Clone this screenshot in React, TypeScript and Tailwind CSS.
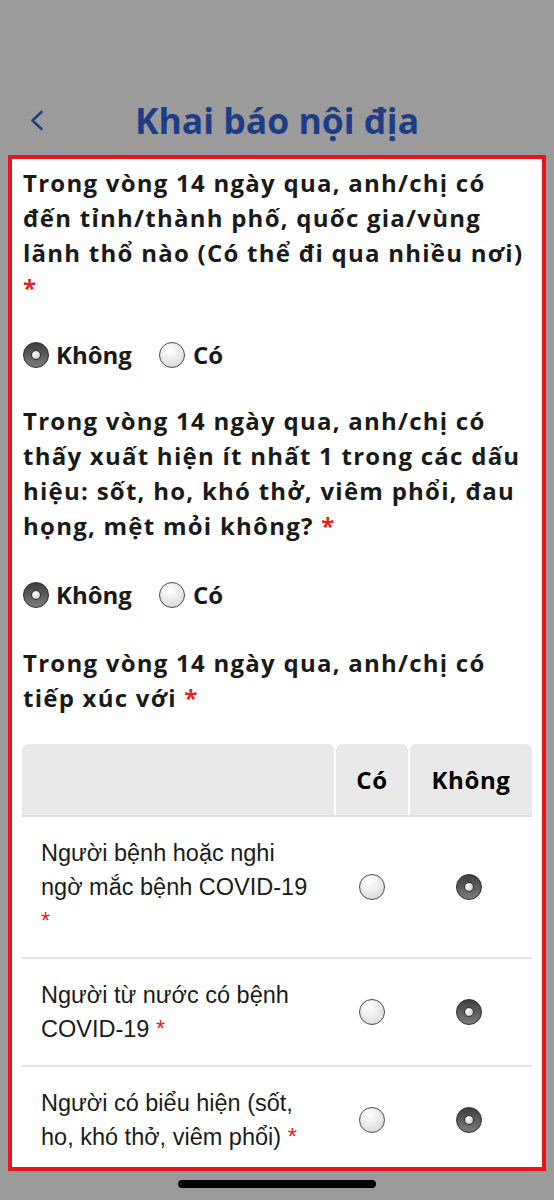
import React from "react";

const Q = "font-['Open_Sans','Noto_Sans',sans-serif]";

function Radio({ checked }: { checked?: boolean }) {
  if (checked) {
    return (
      <span className="flex size-[26px] shrink-0 items-center justify-center rounded-full border-[1.5px] border-[#2b2b2b] bg-[linear-gradient(to_bottom,#3e3e3e,#7c7c7c)]">
        <span className="block size-[10px] rounded-full border border-[#2e2e2e] bg-[radial-gradient(circle_at_40%_35%,#ffffff,#bcbcbc)]" />
      </span>
    );
  }
  return (
    <span className="block size-[26px] shrink-0 rounded-full border-[1.5px] border-[#4a4a4a] bg-[radial-gradient(circle_at_40%_30%,#ffffff,#d2d2d2)]" />
  );
}

function Star() {
  return <span className="text-[#e3241f]">*</span>;
}

function RadioRow({ className }: { className: string }) {
  return (
    <div className={`flex h-[36px] items-center ${className}`}>
      <Radio checked />
      <span className="ml-[7px] text-[24px] font-bold leading-[36px] text-[#1a1a1a]">Không</span>
      <span className="ml-[27px]">
        <Radio />
      </span>
      <span className="ml-[8px] text-[24px] font-bold leading-[36px] text-[#1a1a1a]">Có</span>
    </div>
  );
}

function Question({ children, className }: { children: React.ReactNode; className: string }) {
  return (
    <p className={`text-[24px] font-bold leading-[35px] tracking-[1.25px] text-[#1a1a1a] ${className}`}>{children}</p>
  );
}

const rows: React.ReactNode[] = [
  <>
    Người bệnh hoặc nghi
    <br />
    ngờ mắc bệnh COVID-19
    <br />
    <Star />
  </>,
  <>
    Người từ nước có bệnh
    <br />
    COVID-19 <Star />
  </>,
  <>
    Người có biểu hiện (sốt,
    <br />
    ho, khó thở, viêm phổi) <Star />
  </>,
];

export default function App() {
  return (
    <div className={`min-h-[1200px] w-full bg-[#9b9b9b] ${Q}`}>
      <header className="flex h-[155px] flex-col justify-end pb-[11px]">
        <div className="grid h-[48px] grid-cols-[1fr_auto_1fr] items-center">
          <div className="pl-[29px]">
            <svg width="15" height="21" viewBox="0 0 15 21" fill="none">
              <path d="M12.5 2 L3.5 10.5 L12.5 19" stroke="#203f88" strokeWidth="2.6" strokeLinecap="round" strokeLinejoin="round" />
            </svg>
          </div>
          <h1 className="text-[35.5px] font-bold leading-[48px] text-[#1f3d87]">Khai báo nội địa</h1>
          <div />
        </div>
      </header>

      <main className="mx-[8px] h-[1016px] overflow-hidden border-4 border-[#e8161c] bg-white pl-[11px] pr-[9px] pt-[6px]">
        <Question className="">
          Trong vòng 14 ngày qua, anh/chị có đến tỉnh/thành phố, quốc gia/vùng lãnh thổ nào (Có thể đi qua nhiều nơi)
          <br />
          <Star />
        </Question>
        <RadioRow className="mt-[32px]" />

        <Question className="mt-[30px]">
          Trong vòng 14 ngày qua, anh/chị có thấy xuất hiện ít nhất 1 trong các dấu hiệu: sốt, ho, khó thở, viêm phổi, đau
          họng, mệt mỏi không? <Star />
        </Question>
        <RadioRow className="mt-[34px]" />

        <Question className="mt-[32px]">
          Trong vòng 14 ngày qua, anh/chị có tiếp xúc với <Star />
        </Question>

        <div className="ml-[-1px] mt-[29px] w-[510px]">
          <div className="grid h-[73px] grid-cols-[312px_72px_122px] gap-x-[2px] border-b-2 border-[#dedede]">
            <div className="rounded-t-[6px] bg-[#e9e9e9]" />
            <div className="flex items-center justify-center rounded-t-[6px] bg-[#e9e9e9] text-[24px] font-bold tracking-[0.6px] text-black">
              Có
            </div>
            <div className="flex items-center justify-center rounded-t-[6px] bg-[#e9e9e9] text-[24px] font-bold tracking-[0.6px] text-black">
              Không
            </div>
          </div>
          {rows.map((text, i) => (
            <div
              key={i}
              className={`grid grid-cols-[312px_72px_122px] gap-x-[2px] ${i < rows.length - 1 ? "border-b-2 border-[#e3e3e3]" : ""}`}
            >
              <div className="py-[19px] pl-[19px] font-['Liberation_Sans',Arial,sans-serif] text-[23.5px] leading-[34px] text-[#1b1b1b]">
                {text}
              </div>
              <div className="flex items-center justify-center">
                <Radio />
              </div>
              <div className="flex items-center justify-center pr-[4px]">
                <Radio checked />
              </div>
            </div>
          ))}
        </div>
      </main>

      <div className="flex h-[29px] items-start justify-center pt-[9px]">
        <div className="h-[8px] w-[198px] rounded-full bg-black" />
      </div>
    </div>
  );
}
